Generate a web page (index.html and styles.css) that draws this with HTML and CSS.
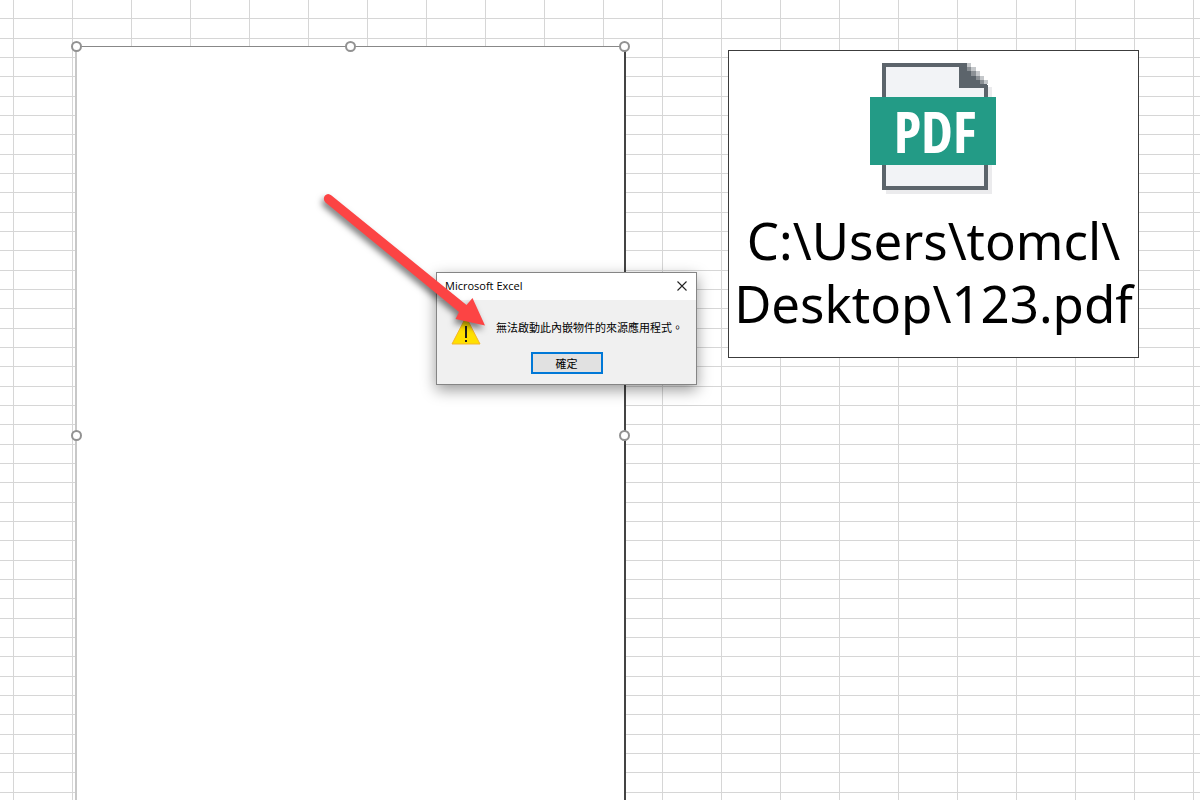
FILE: index.html
```
<!DOCTYPE html>
<html lang="zh-Hant">
<head>
<meta charset="utf-8">
<meta name="viewport" content="width=device-width, initial-scale=1">
<title>Microsoft Excel</title>
<link rel="stylesheet" href="styles.css">
</head>
<body>
<main class="sheet">
  <svg class="gridlines" aria-hidden="true">
    <defs>
      <pattern id="cells" width="59" height="58" patternUnits="userSpaceOnUse">
        <path class="gridlines-line" d="M13 0h1v58h-1zM0 18h59v1H0zM0 38h59v1H0zM0 57h59v1H0z"/>
      </pattern>
    </defs>
    <rect width="100%" height="100%" fill="url(#cells)"/>
  </svg>

  <div class="embedded">
    <span class="handle handle-nw"></span>
    <span class="handle handle-n"></span>
    <span class="handle handle-ne"></span>
    <span class="handle handle-w"></span>
    <span class="handle handle-e"></span>
  </div>

  <figure class="file">
    <svg class="file-icon" width="128" height="132" viewBox="0 0 128 132" role="img" aria-label="PDF">
      <path fill="#ebebed" d="M118 24h4v107H16v-4h102z"/>
      <path fill="#5c646b" d="M12 0h85v4h5v4h5v5h5v4h5v5h1v105H12z"/>
      <path fill="#f2f3f6" d="M16 4h73v21h25v98H16z"/>
      <path fill="#c4c7ca" d="M97 0h4v4h-4zM101 4h5v4h-5zM106 8h4v5h-4zM110 13h4v4h-4zM114 17h4v4h-4z"/>
      <path fill="#8b9095" d="M97 4h4v4h-4zM101 8h5v5h-5zM106 13h4v4h-4zM110 17h4v4h-4z"/>
      <path fill="#239b86" d="M0 34h126v68H0z"/>
      <text class="file-type" x="65" y="90" text-anchor="middle">PDF</text>
    </svg>
    <figcaption class="file-path">
      <span>C:\Users\tomcl\</span>
      <span>Desktop\123.pdf</span>
    </figcaption>
  </figure>

  <section class="dialog" role="alertdialog" aria-labelledby="dialog-title" aria-describedby="dialog-message">
    <header class="dialog-bar">
      <h1 class="dialog-title" id="dialog-title">Microsoft Excel</h1>
      <button class="dialog-close" type="button" aria-label="Close">
        <svg width="12" height="12" viewBox="0 0 12 12" aria-hidden="true"><path d="M1.5 1.5l9 9M10.5 1.5l-9 9" fill="none" stroke="#222" stroke-width="1.1"/></svg>
      </button>
    </header>
    <div class="dialog-body">
      <svg class="dialog-icon" width="30" height="29" viewBox="0 0 30 29" aria-hidden="true">
        <path d="M15 1L29 28H1z" fill="#ffe000" stroke="#f5b52a" stroke-linejoin="round"/>
        <path d="M14 10h2v12h-2zM14 24h2v2h-2z" fill="#1d1d1d"/>
      </svg>
      <p class="dialog-message" id="dialog-message">無法啟動此內嵌物件的來源應用程式。</p>
    </div>
    <footer class="dialog-actions">
      <button class="dialog-ok" type="button">確定</button>
    </footer>
  </section>

  <svg class="arrow" width="180" height="150" viewBox="0 0 180 150" aria-hidden="true">
    <path d="M21.500 15.500Q18 12.500 15 15.500Q12.500 19 15.500 22.500L149 132L145.500 139L175 145.500L162.500 118L156.500 125Z" fill="#fc4444"/>
  </svg>
</main>
</body>
</html>
```
FILE: styles.css
```
* {
  box-sizing: border-box;
}

body {
  margin: 0;
  font-family: "Noto Sans", "Noto Sans CJK TC", sans-serif;
  color: #000;
  background: #fff;
}

.sheet {
  position: relative;
  height: 100vh;
  overflow: hidden;
}

.gridlines {
  display: block;
  width: 100%;
  height: 100%;
}

.gridlines-line {
  fill: #d6d6d6;
}

/* Selected object on the sheet */
.embedded {
  position: absolute;
  top: 46px;
  left: 75px;
  width: 551px;
  height: 778px;
  background: #fff;
  border-top: 1px solid #888;
  border-left: 2px solid #c8c8c8;
  border-right: 2px solid #444;
}

.handle {
  position: absolute;
  width: 11px;
  height: 11px;
  margin: -6px;
  border: 2px solid #929292;
  border-radius: 50%;
  background: #fff;
}

.handle-nw { top: 0; left: 0; }
.handle-n { top: 0; left: 50%; }
.handle-ne { top: 0; right: 0; }
.handle-w { top: 50%; left: 0; }
.handle-e { top: 50%; right: 0; }

/* Linked file */
.file {
  position: absolute;
  top: 50px;
  left: 728px;
  display: flex;
  flex-direction: column;
  align-items: center;
  width: 411px;
  height: 308px;
  margin: 0;
  padding-top: 12px;
  background: #fff;
  border: 1px solid #3c3c3c;
}

.file-icon {
  flex: none;
}

.file-type {
  font: bold 57px "Liberation Sans Narrow", "Open Sans Condensed", "DejaVu Sans Condensed", sans-serif;
  fill: #fff;
}

.file-path {
  display: flex;
  flex-direction: column;
  align-items: center;
  margin-top: 14px;
  font-size: 51px;
  line-height: 63px;
  white-space: nowrap;
}

/* Message box */
.dialog {
  position: absolute;
  top: 272px;
  left: 436px;
  width: 261px;
  background: #f0f0f0;
  border: 1px solid #858585;
  box-shadow: 0 5px 14px rgba(0, 0, 0, 0.4);
}

.dialog-bar {
  display: flex;
  align-items: center;
  justify-content: space-between;
  height: 27px;
  padding: 0 8px 2px;
  background: #fff;
}

.dialog-title {
  margin: 0;
  font: 11px "Open Sans", sans-serif;
}

.dialog-close {
  display: flex;
  padding: 0;
  border: 0;
  background: none;
}

.dialog-body {
  display: flex;
  align-items: center;
  gap: 15px;
  height: 52px;
  padding: 2px 8px 0 14px;
}

.dialog-icon {
  flex: none;
  margin-top: 6px;
}

.dialog-message {
  margin: 0;
  font: 11px "Noto Sans CJK TC", sans-serif;
  white-space: nowrap;
}

.dialog-actions {
  display: flex;
  justify-content: center;
  height: 32px;
}

.dialog-ok {
  width: 72px;
  height: 22px;
  padding: 0;
  border: 2px solid #0078d7;
  background: #e1e1e1;
  color: #000;
  font: 11px "Noto Sans CJK TC", sans-serif;
}

/* Annotation over the dialog */
.arrow {
  position: absolute;
  top: 180px;
  left: 310px;
  overflow: visible;
  filter: drop-shadow(-2px 4px 3px rgba(0, 0, 0, 0.5));
  pointer-events: none;
}
```
